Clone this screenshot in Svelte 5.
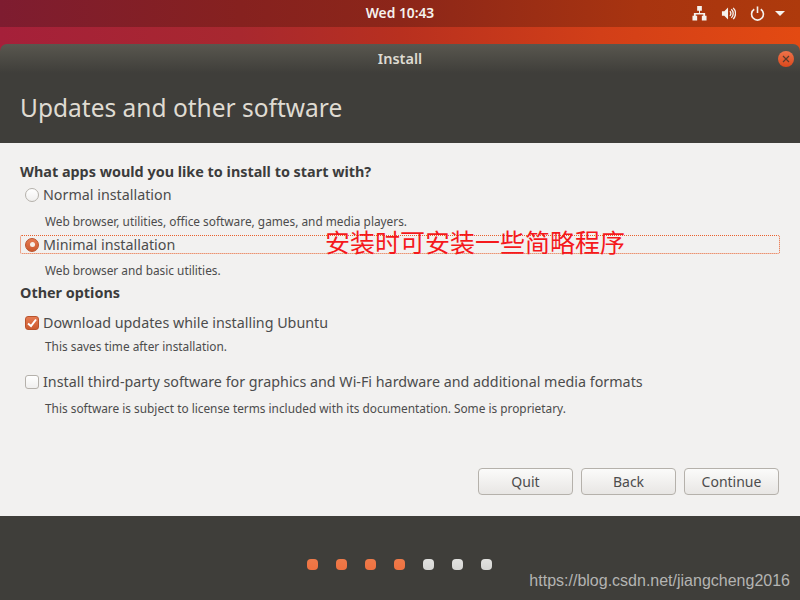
<script lang="ts">
    const steps = [true, true, true, true, false, false, false];
</script>

<div class="desktop">
    <div class="panel">
        <span class="clock">Wed 10:43</span>
        <div class="tray">
            <svg width="15" height="15" viewBox="0 0 16 16" fill="#f5f2ee">
                <path d="M5.500 0h5v5h-2v2.500h5.500v3h1.500v5h-5v-5h1.500v-1.500h-8v1.500h1.500v5h-5v-5h1.500v-3h5.500v-2.500h-2z" />
            </svg>
            <svg width="15" height="15" viewBox="0 0 16 16" fill="none" stroke="#f5f2ee" stroke-width="1.400">
                <path d="M1 5.500h2.500l4-4v13l-4-4h-2.500z" fill="#f5f2ee" stroke="none" />
                <path d="M9.500 5.500a3.500 3.500 0 0 1 0 5" />
                <path d="M11 3.500a6 6 0 0 1 0 9" />
                <path d="M13 2a8.500 8.500 0 0 1 0 12" />
            </svg>
            <svg width="15" height="15" viewBox="0 0 16 16" fill="none" stroke="#f5f2ee" stroke-width="1.700">
                <path d="M4.500 3.500a6.300 6.300 0 1 0 7 0" />
                <path d="M8 0.500v7" />
            </svg>
            <svg class="arrow" width="10" height="6" viewBox="0 0 10 6" fill="#f5f2ee"><path d="M0 0h10l-5 5z" /></svg>
        </div>
    </div>

    <div class="window">
        <div class="titlebar">
            <span class="title">Install</span>
            <button class="close" aria-label="Close">
                <svg width="8" height="8" viewBox="0 0 8 8" stroke="#5c3a2a" stroke-width="1.200"><path d="M1 1l6 6M7 1l-6 6" /></svg>
            </button>
        </div>
        <div class="header">
            <h1>Updates and other software</h1>
        </div>

        <div class="content">
            <h2 class="apps">What apps would you like to install to start with?</h2>

            <div class="option normal">
                <span class="radio"></span>
                <span class="label">Normal installation</span>
            </div>
            <p class="hint h1">Web browser, utilities, office software, games, and media players.</p>

            <div class="option minimal">
                <span class="radio on"></span>
                <span class="label">Minimal installation</span>
            </div>
            <p class="hint h2">Web browser and basic utilities.</p>

            <h2 class="other">Other options</h2>

            <div class="option updates">
                <span class="check on">
                    <svg width="10" height="10" viewBox="0 0 10 10" fill="none" stroke="#fff" stroke-width="2"><path d="M1 5.500l3 2.500 5-6.500" /></svg>
                </span>
                <span class="label">Download updates while installing Ubuntu</span>
            </div>
            <p class="hint h3">This saves time after installation.</p>

            <div class="option third">
                <span class="check"></span>
                <span class="label">Install third-party software for graphics and Wi-Fi hardware and additional media formats</span>
            </div>
            <p class="hint h4">This software is subject to license terms included with its documentation. Some is proprietary.</p>

            <div class="actions">
                <button>Quit</button>
                <button>Back</button>
                <button>Continue</button>
            </div>

            <span class="note">安装时可安装一些简略程序</span>
        </div>

        <div class="footer">
            {#each steps as done}
                <span class="dot" class:done></span>
            {/each}
            <span class="mark">https://blog.csdn.net/jiangcheng2016</span>
        </div>
    </div>
</div>

<style>
    :global(body) { margin: 0; }
    .desktop {
        width: 800px;
        height: 600px;
        overflow: hidden;
        background: linear-gradient(90deg, #a5203a 0%, #a8282f 30%, #b8301f 50%, #d23f18 75%, #e34a12 100%);
        font-family: "Noto Sans", "Open Sans", sans-serif;
        display: flex;
        flex-direction: column;
    }
    .panel {
        height: 27px;
        flex: none;
        background: linear-gradient(90deg, #7e1c30 0%, #86211f 30%, #8c2619 50%, #a83410 80%, #ae3a0c 100%);
        display: grid;
        grid-template-columns: 1fr auto 1fr;
        align-items: center;
        color: #f5f2ee;
    }
    .clock {
        grid-column: 2;
        font-size: 13.800px;
        font-weight: 600;
        line-height: 25px;
        margin-bottom: 2px;
    }
    .tray {
        grid-column: 3;
        display: flex;
        align-items: center;
        justify-content: flex-end;
        gap: 14px;
        padding-right: 15px;
    }
    .arrow { margin-left: -4px; }
    .window {
        margin-top: 17px;
        flex: 1;
        display: flex;
        flex-direction: column;
        border-radius: 7px 7px 0 0;
        overflow: hidden;
    }
    .titlebar {
        height: 29px;
        flex: none;
        background: linear-gradient(#59574f, #3f3e3a);
        display: flex;
        align-items: center;
        justify-content: center;
        position: relative;
    }
    .title {
        color: #dfdbd2;
        font-size: 14.500px;
        font-weight: 600;
        line-height: 28px;
        margin-bottom: 1px;
    }
    .close {
        position: absolute;
        right: 6px;
        top: 7px;
        width: 16px;
        height: 16px;
        padding: 0;
        border: none;
        border-radius: 50%;
        background: linear-gradient(#f0734a, #d9481c);
        display: flex;
        align-items: center;
        justify-content: center;
    }
    .header {
        height: 70px;
        flex: none;
        background: #3f3e3a;
        box-sizing: border-box;
        padding: 19px 20px 0;
    }
    h1 {
        margin: 0;
        color: #dfdbd2;
        font-size: 24.500px;
        font-weight: 400;
        line-height: 32px;
    }
    .content {
        flex: 1;
        background: #f2f1f0;
        position: relative;
        display: flex;
        flex-direction: column;
        padding: 0 20px;
        color: #4c4c4c;
    }
    h2 {
        margin: 0;
        font-size: 14.400px;
        font-weight: 700;
        line-height: 18px;
        color: #3c3c3c;
    }
    .apps { margin-top: 20px; }
    .other { margin-top: 6px; }
    .option {
        display: flex;
        align-items: center;
        gap: 4px;
        height: 19px;
        padding-left: 5px;
        box-sizing: border-box;
        font-size: 14.300px;
    }
    .normal { margin-top: 4px; }
    .minimal {
        margin-top: 6px;
        border: 1px dotted #e8602e;
        border-radius: 2px;
        padding-left: 4px;
    }
    .updates { margin-top: 11px; }
    .third { margin-top: 18px; }
    .label { white-space: nowrap; }
    .radio, .check {
        width: 12px;
        height: 12px;
        flex: none;
        border: 1px solid #b5b1ab;
        background: linear-gradient(#fff, #f0efee);
        display: flex;
        align-items: center;
        justify-content: center;
    }
    .radio { border-radius: 50%; }
    .check { border-radius: 3px; }
    .radio.on, .check.on {
        background: linear-gradient(#e67b52, #cc5a2f);
        border-color: #b9532c;
    }
    .radio.on::after {
        content: "";
        width: 5px;
        height: 5px;
        border-radius: 50%;
        background: #f6efe9;
    }
    .hint {
        margin: 0;
        padding-left: 25px;
        font-size: 11.850px;
        line-height: 16px;
        white-space: nowrap;
    }
    .h1 { margin-top: 9px; }
    .h2 { margin-top: 8px; }
    .h3 { margin-top: 6px; }
    .h4 { margin-top: 9px; }
    .actions {
        position: absolute;
        right: 21px;
        bottom: 21px;
        display: flex;
        gap: 8px;
    }
    .actions button {
        width: 95px;
        height: 27px;
        padding: 0;
        border: 1px solid #b5b1ab;
        border-radius: 4px;
        background: linear-gradient(#fbfbfa, #e8e6e4);
        color: #4c4c4c;
        font: inherit;
        font-size: 14px;
    }
    .note {
        position: absolute;
        left: 325px;
        top: 82px;
        color: #f5191c;
        font-family: "Noto Sans CJK SC", sans-serif;
        font-size: 25px;
        line-height: 32px;
        white-space: nowrap;
    }
    .footer {
        height: 84px;
        flex: none;
        background: #3f3e3a;
        position: relative;
        display: flex;
        align-items: center;
        justify-content: center;
        gap: 18px;
        padding-right: 2px;
        box-sizing: border-box;
        padding-top: 12px;
    }
    .dot {
        width: 11px;
        height: 11px;
        border-radius: 4px;
        background: linear-gradient(#e2e2e0, #d6d6d4);
    }
    .dot.done { background: linear-gradient(#ee7a4a, #ef7140); }
    .mark {
        position: absolute;
        right: 10px;
        bottom: 10px;
        color: #b4b4b2;
        font-family: "Liberation Sans", sans-serif;
        font-size: 16px;
    }
</style>
